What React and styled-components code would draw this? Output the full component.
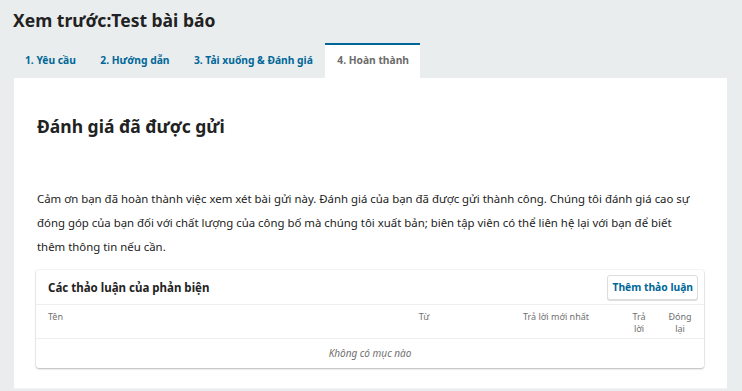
import styled, { createGlobalStyle } from "styled-components";

const GlobalStyle = createGlobalStyle`
  html, body {
    margin: 0;
    padding: 0;
    background: #eaedee;
    font-family: "Noto Sans", "Open Sans", sans-serif;
    color: #222;
  }
`;

const Page = styled.div`
  width: 742px;
  height: 391px;
  overflow: hidden;
  box-sizing: border-box;
  padding: 0 15px 0 13px;
`;

const Title = styled.h1`
  margin: 0;
  padding-top: 6px;
  height: 37px;
  font-size: 17.5px;
  font-weight: 700;
  line-height: 28px;
  color: #222;
`;

const TabBar = styled.div`
  display: flex;
  height: 35px;
`;

const Tab = styled.div`
  box-sizing: border-box;
  padding: 0 11px 0 12px;
  border-top: 2px solid ${p => (p.$active ? "#006798" : "transparent")};
  background: ${p => (p.$active ? "#fff" : "transparent")};
  color: ${p => (p.$active ? "#6b6b6b" : "#006798")};
  font-size: 10.25px;
  font-weight: 700;
  line-height: 31px;
  white-space: nowrap;
  margin-right: 1.5px;
`;

const Panel = styled.section`
  background: #fff;
  margin-left: 1px;
  height: 311px;
  box-sizing: border-box;
  padding: 0 23px 0 23px;
  border-bottom: 1px solid #f4f4f4;
`;

const Heading = styled.h2`
  margin: 0;
  padding-top: 36px;
  font-size: 17.5px;
  font-weight: 700;
  line-height: 24px;
  color: #222;
`;

const Lead = styled.p`
  margin: 49px 0 11px;
  padding-right: 5px;
  font-size: 11.4px;
  line-height: 24px;
  color: #222;
`;

const Card = styled.div`
  background: #fff;
  border-radius: 3px;
  box-shadow: 0 1px 2px rgba(0, 0, 0, 0.25), 0 0 0 1px rgba(0, 0, 0, 0.03);
  margin-left: -1px;
`;

const CardHeader = styled.div`
  display: flex;
  align-items: center;
  justify-content: space-between;
  height: 34px;
  padding: 0 6px 0 12px;
  border-bottom: 1px solid #eee;
`;

const CardTitle = styled.h3`
  margin: 0;
  font-size: 11.5px;
  font-weight: 700;
  color: #222;
`;

const Button = styled.button`
  height: 25px;
  padding: 0 4px;
  background: #fff;
  border: 1px solid #ddd;
  border-radius: 3px;
  box-shadow: 0 1px 0 #ddd;
  color: #006798;
  font-family: inherit;
  font-size: 10.3px;
  font-weight: 700;
  cursor: pointer;
`;

const HeadRow = styled.div`
  display: grid;
  grid-template-columns: 322px 132px 132px 34px 1fr;
  align-items: start;
  height: 34px;
  box-sizing: border-box;
  padding-top: 6px;
  border-bottom: 1px solid #eee;
  font-size: 9px;
  line-height: 12px;
  color: #707070;
`;

const HeadCell = styled.div`
  text-align: ${p => p.$align || "center"};
  padding: ${p => p.$pad || "0"};
`;

const EmptyRow = styled.div`
  height: 29px;
  line-height: 28px;
  text-align: center;
  font-size: 10px;
  font-style: italic;
  color: #707070;
`;

export default function App() {
  return (
    <Page>
      <GlobalStyle />
      <Title>Xem trước:Test bài báo</Title>
      <TabBar>
        <Tab>1. Yêu cầu</Tab>
        <Tab>2. Hướng dẫn</Tab>
        <Tab>3. Tải xuống &amp; Đánh giá</Tab>
        <Tab $active>4. Hoàn thành</Tab>
      </TabBar>
      <Panel>
        <Heading>Đánh giá đã được gửi</Heading>
        <Lead>
          Cảm ơn bạn đã hoàn thành việc xem xét bài gửi này. Đánh giá của bạn đã
          được gửi thành công. Chúng tôi đánh giá cao sự đóng góp của bạn đối
          với chất lượng của công bố mà chúng tôi xuất bản; biên tập viên có thể
          liên hệ lại với bạn để biết thêm thông tin nếu cần.
        </Lead>
        <Card>
          <CardHeader>
            <CardTitle>Các thảo luận của phản biện</CardTitle>
            <Button>Thêm thảo luận</Button>
          </CardHeader>
          <HeadRow>
            <HeadCell $align="left" $pad="0 0 0 12px">Tên</HeadCell>
            <HeadCell>Từ</HeadCell>
            <HeadCell>Trả lời mới nhất</HeadCell>
            <HeadCell $pad="0 7px">Trả lời</HeadCell>
            <HeadCell $pad="0 8px">Đóng lại</HeadCell>
          </HeadRow>
          <EmptyRow>Không có mục nào</EmptyRow>
        </Card>
      </Panel>
    </Page>
  );
}
